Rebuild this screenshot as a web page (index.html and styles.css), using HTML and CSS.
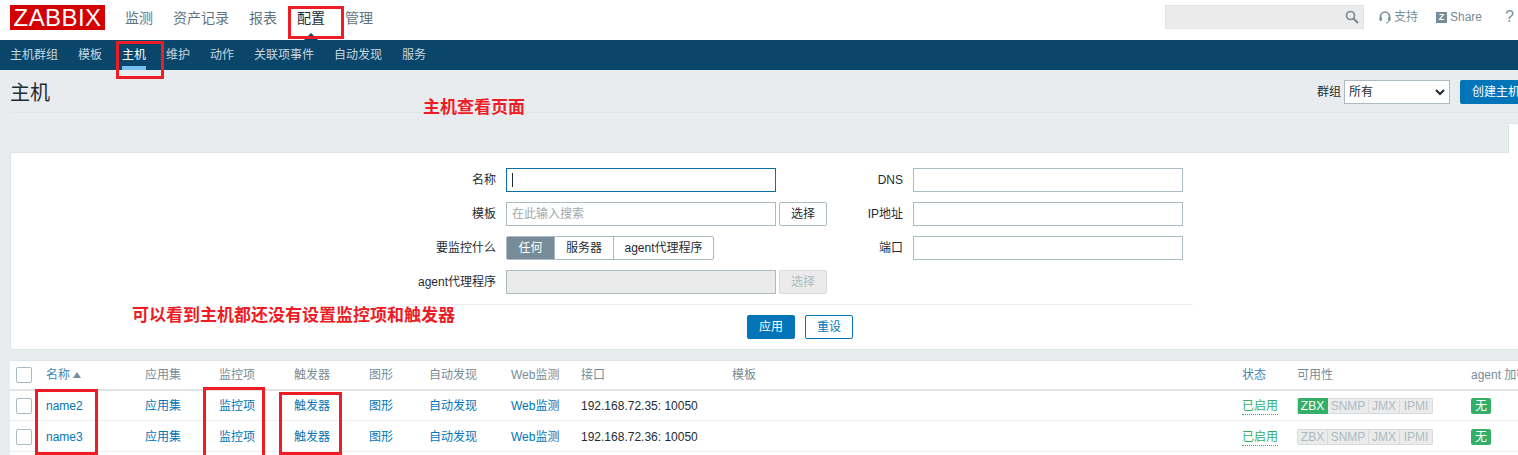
FILE: index.html
```html
<!DOCTYPE html>
<html lang="zh-CN">
<head>
<meta charset="utf-8">
<title>主机</title>
<link rel="stylesheet" href="styles.css">
</head>
<body>
<div class="page">
  <header class="topbar">
    <div class="logo">ZABBIX</div>
    <nav class="mainnav">
      <a>监测</a><a>资产记录</a><a>报表</a><a class="current">配置</a><a>管理</a>
    </nav>
    <div class="tools">
      <div class="search">
        <svg class="search-icon" viewBox="0 0 14 14" width="14" height="14"><circle cx="5.5" cy="5.5" r="4" fill="none" stroke="#7b8a92" stroke-width="1.7"/><path d="M8.5 8.5L13 13" stroke="#7b8a92" stroke-width="2.2"/></svg>
      </div>
      <a class="tool support">
        <svg viewBox="0 0 12 13" width="12" height="13"><path d="M1.5 8V5.5a4.5 4.5 0 0 1 9 0V8" fill="none" stroke="#768d99" stroke-width="1.6"/><rect x="0.5" y="6" width="2.4" height="4" rx="1" fill="#768d99"/><rect x="9.1" y="6" width="2.4" height="4" rx="1" fill="#768d99"/><path d="M10 10q-.5 2-3 2" fill="none" stroke="#768d99"/></svg>
        <span>支持</span>
      </a>
      <a class="tool share"><span class="z">Z</span><span>Share</span></a>
      <a class="tool help">?</a>
    </div>
  </header>
  <nav class="subnav">
    <a>主机群组</a><a>模板</a><a class="active">主机</a><a>维护</a><a>动作</a><a>关联项事件</a><a>自动发现</a><a>服务</a>
  </nav>
  <main class="content">
    <div class="titlebar">
      <h1>主机</h1>
      <div class="controls">
        <span class="ctl-label">群组</span>
        <div class="select">
          <span>所有</span>
          <svg viewBox="0 0 10 7" width="10" height="7"><path d="M1 1l4 4 4-4" fill="none" stroke="#1f2c33" stroke-width="2"/></svg>
        </div>
        <button class="create">创建主机</button>
      </div>
    </div>
    <div class="tabrow"><div class="filter-tab"></div></div>
    <section class="filter">
      <form class="filter-form">
        <div class="grid">
          <label>名称</label>
          <div class="field"><div class="focus-wrap"><input class="input focused" type="text"><i class="caret"></i></div></div>
          <label>DNS</label>
          <input class="input" type="text">

          <label>模板</label>
          <div class="field"><input class="input" type="text" placeholder="在此输入搜索"><button type="button" class="pick">选择</button></div>
          <label>IP地址</label>
          <input class="input" type="text">

          <label>要监控什么</label>
          <div class="seg"><span class="on">任何</span><span>服务器</span><span>agent代理程序</span></div>
          <label>端口</label>
          <input class="input" type="text">

          <label>agent代理程序</label>
          <div class="field"><input class="input off" type="text" disabled><button type="button" class="pick dim" disabled>选择</button></div>
        </div>
        <div class="actions">
          <button type="button" class="apply">应用</button>
          <button type="button" class="reset">重设</button>
        </div>
      </form>
    </section>
    <table class="hosts">
      <colgroup>
        <col class="c1"><col class="c2"><col class="c3"><col class="c4"><col class="c5"><col class="c6"><col class="c7"><col class="c8"><col class="c9"><col class="c10"><col class="c11"><col class="c12"><col class="c13">
      </colgroup>
      <thead>
        <tr>
          <th class="cb"><i class="check"></i></th>
          <th class="sort">名称<i class="arrow"></i></th>
          <th>应用集</th><th>监控项</th><th>触发器</th><th>图形</th><th>自动发现</th><th>Web监测</th><th>接口</th><th>模板</th>
          <th class="sort">状态</th><th>可用性</th><th>agent 加密</th>
        </tr>
      </thead>
      <tbody>
        <tr>
          <td class="cb"><i class="check"></i></td>
          <td><a>name2</a></td><td><a>应用集</a></td><td><a>监控项</a></td><td><a>触发器</a></td><td><a>图形</a></td><td><a>自动发现</a></td><td><a>Web监测</a></td>
          <td>192.168.72.35: 10050</td><td></td>
          <td><a class="enabled">已启用</a></td>
          <td><div class="avail"><b class="ok">ZBX</b><b>SNMP</b><b>JMX</b><b>IPMI</b></div></td>
          <td><span class="none">无</span></td>
        </tr>
        <tr>
          <td class="cb"><i class="check"></i></td>
          <td><a>name3</a></td><td><a>应用集</a></td><td><a>监控项</a></td><td><a>触发器</a></td><td><a>图形</a></td><td><a>自动发现</a></td><td><a>Web监测</a></td>
          <td>192.168.72.36: 10050</td><td></td>
          <td><a class="enabled">已启用</a></td>
          <td><div class="avail"><b>ZBX</b><b>SNMP</b><b>JMX</b><b>IPMI</b></div></td>
          <td><span class="none">无</span></td>
        </tr>
        <tr>
          <td colspan="13"></td>
        </tr>
      </tbody>
    </table>
  </main>

  <span class="note note-a">主机查看页面</span>
  <span class="note note-b">可以看到主机都还没有设置监控项和触发器</span>
  <i class="mark m-config"></i>
  <i class="mark m-host"></i>
  <i class="mark m-name"></i>
  <i class="mark m-items"></i>
  <i class="mark m-trig"></i>
</div>
</body>
</html>
```

FILE: styles.css
```css
* { box-sizing: border-box; }
html, body { margin: 0; height: 455px; overflow: hidden; background: #fff; }
body { font: 12px/14px "Liberation Sans", "Noto Sans CJK SC", sans-serif; color: #1f2c33; }
.page { position: relative; width: 1570px; height: 455px; overflow: hidden; background: #e9ecef; }
a { color: inherit; text-decoration: none; }
i { font-style: normal; }

/* top bar */
.topbar { height: 40px; background: #fff; display: flex; align-items: flex-start; padding-left: 10px; width: 1518px; }
.logo { width: 95px; height: 25px; margin-top: 5px; background: #d40000; color: #fff; font-size: 24px; line-height: 26px; text-align: center; letter-spacing: .4px; }
.mainnav { display: flex; gap: 20px; margin-left: 20px; font-size: 14px; line-height: 16px; color: #5f7480; padding-top: 10px; }
.mainnav a { position: relative; }
.mainnav .current { color: #1f2c33; }
.mainnav .current::after { content: ""; position: absolute; left: 7px; top: 23px; border: 7px solid transparent; border-top: 0; border-bottom-color: #0a466a; }
.tools { margin-left: auto; display: flex; align-items: center; height: 24px; margin-top: 5px; color: #768d99; }
.search { position: relative; width: 199px; height: 24px; background: #ebebeb; border: 1px solid #e4e4e4; margin-right: 15px; }
.search-icon { position: absolute; right: 4px; top: 4px; }
.tool { display: flex; align-items: center; gap: 3px; }
.support { width: 57px; }
.share { width: 69px; }
.z { width: 11px; height: 11px; background: #768d99; color: #fff; font: bold 9px/11px "Liberation Sans", sans-serif; text-align: center; }
.help { width: 13px; font-size: 16px; color: #768d99; }

/* sub nav */
.subnav { height: 30px; background: #0a466a; display: flex; gap: 20px; padding-left: 10px; color: #c6d7e0; line-height: 30px; }
.subnav .active { position: relative; color: #fff; }
.subnav .active::after { content: ""; position: absolute; left: 0; right: 0; bottom: 0; height: 4px; background: #74c0f0; }

/* content */
.content { padding-left: 10px; }
.titlebar { height: 43px; border-bottom: 1px solid #dfe4e7; display: flex; justify-content: space-between; align-items: flex-start; padding-top: 10px; }
h1 { margin: 1px 0 0; font-size: 20px; line-height: 24px; font-weight: normal; }
.controls { display: flex; align-items: center; width: 253px; margin-left: auto; }
.ctl-label { margin-right: 3px; }
.select { width: 106px; height: 24px; background: #fff; border: 1px solid #acbbc2; display: flex; align-items: center; justify-content: space-between; padding: 0 4px; margin-right: 10px; }
.create { width: 110px; height: 24px; border: 0; border-radius: 2px; background: #0275b8; color: #fff; font: inherit; text-align: left; padding: 0 0 0 12px; }
.tabrow { height: 39px; padding-top: 10px; display: flex; }
.filter-tab { margin-left: 1498px; width: 60px; height: 30px; background: #fff; border: 1px solid #dfe4e7; border-bottom: 0; }

.filter { height: 198px; background: #fff; border: 1px solid #dfe4e7; padding: 15px 0 0 396px; margin-bottom: 10px; }
.filter-form { width: 786px; }
.grid { display: grid; grid-template-columns: 99px 321px 86px 270px; row-gap: 10px; grid-auto-rows: 24px; padding-bottom: 10px; border-bottom: 1px solid #ebeef0; }
.grid label { line-height: 24px; text-align: right; padding-right: 10px; color: #1f2c33; }
.input { width: 270px; height: 24px; border: 1px solid #acbbc2; background: #fff; padding: 0 5px; font: inherit; color: #1f2c33; outline: 0; border-radius: 0; display: block; }
.input::placeholder { color: #9fa9ae; opacity: 1; }
.input.focused { border-color: #0a6fa8; }
.input.off { background: #ebebeb; }
.field { display: flex; gap: 3px; }
.focus-wrap { position: relative; }
.caret { position: absolute; left: 6px; top: 5px; width: 1px; height: 14px; background: #1f2c33; }
.pick { width: 48px; height: 24px; border: 1px solid #acbbc2; border-radius: 2px; background: #fff; font: inherit; color: #1f2c33; padding: 0; }
.pick.dim { background: #ebebeb; border-color: #d5dbde; color: #acbbc2; }
.seg { display: flex; width: 208px; height: 24px; border: 1px solid #acbbc2; border-radius: 2px; line-height: 22px; text-align: center; white-space: nowrap; }
.seg span { border-left: 1px solid #acbbc2; }
.seg span:first-child { border-left: 0; }
.seg .on { width: 47px; background: #768d99; color: #fff; }
.seg span:nth-child(2) { width: 59px; }
.seg span:nth-child(3) { flex: 1; }
.actions { display: flex; justify-content: flex-start; gap: 10px; padding: 10px 0 0 340px; }
.apply, .reset { width: 48px; height: 24px; border-radius: 2px; font: inherit; padding: 0; }
.apply { background: #0275b8; border: 1px solid #0275b8; color: #fff; }
.reset { background: #fff; border: 1px solid #0275b8; color: #0275b8; }

/* table */
.hosts { table-layout: fixed; width: 1550px; border-collapse: collapse; background: #fff; border-top: 1px solid #dfe4e7; }
.c1 { width: 31px; } .c2 { width: 99px; } .c3 { width: 74px; } .c4 { width: 75px; } .c5 { width: 75px; } .c6 { width: 60px; } .c7 { width: 82px; }
.c8 { width: 70px; } .c9 { width: 151px; } .c10 { width: 510px; } .c11 { width: 55px; } .c12 { width: 174px; } .c13 { width: 94px; }
.hosts th { height: 29px; padding: 0 5px; text-align: left; font-weight: normal; color: #768d99; border-bottom: 2px solid #dfe4e7; white-space: nowrap; overflow: hidden; }
.hosts td { height: 31px; padding: 1px 5px 0; border-bottom: 1px solid #ebeef0; white-space: nowrap; }
.hosts td a { color: #0275b8; }
.hosts .sort { color: #3f86b5; }
.hosts .cb { padding-left: 6px; }
.check { display: block; width: 16px; height: 16px; background: #fff; border: 1px solid #acbbc2; border-radius: 2px; }
.arrow { display: inline-block; margin-left: 3px; border: 4px solid transparent; border-top: 0; border-bottom: 6px solid #768d99; vertical-align: 1px; }
.hosts td .enabled { color: #34af67; border-bottom: 1px dotted #34af67; padding-bottom: 1px; }
.avail { display: inline-flex; height: 16px; border-radius: 2px; vertical-align: middle; }
.avail b { height: 16px; font-weight: normal; font-size: 12px; line-height: 14px; background: #ebebeb; color: #acbbc2; border: 1px solid #d5dbde; border-left: 0; text-align: center; }
.avail b:nth-child(1) { width: 31px; border-left: 1px solid #d5dbde; border-radius: 2px 0 0 2px; }
.avail b:nth-child(2) { width: 41px; }
.avail b:nth-child(3) { width: 31px; }
.avail b:nth-child(4) { width: 33px; border-radius: 0 2px 2px 0; }
.avail .ok { background: #34af67; color: #fff; border-color: #34af67; }
.none { display: inline-block; width: 20px; height: 16px; line-height: 16px; text-align: center; background: #34af67; color: #fff; border-radius: 2px; vertical-align: middle; }

/* annotations drawn over the screenshot */
.note { position: absolute; color: #ee1c25; font-family: "Liberation Serif", "Noto Sans CJK SC", serif; font-weight: bold; font-size: 17px; line-height: 20px; white-space: nowrap; }
.note-a { left: 423px; top: 98px; }
.note-b { left: 132px; top: 306px; }
.mark { position: absolute; border: 3px solid #ee1c25; }
.m-config { left: 288px; top: 6px; width: 56px; height: 33px; }
.m-host { left: 116px; top: 41px; width: 48px; height: 38px; }
.m-name { left: 35px; top: 389px; width: 63px; height: 66px; }
.m-items { left: 203px; top: 387px; width: 62px; height: 80px; }
.m-trig { left: 279px; top: 392px; width: 63px; height: 63px; }
```
